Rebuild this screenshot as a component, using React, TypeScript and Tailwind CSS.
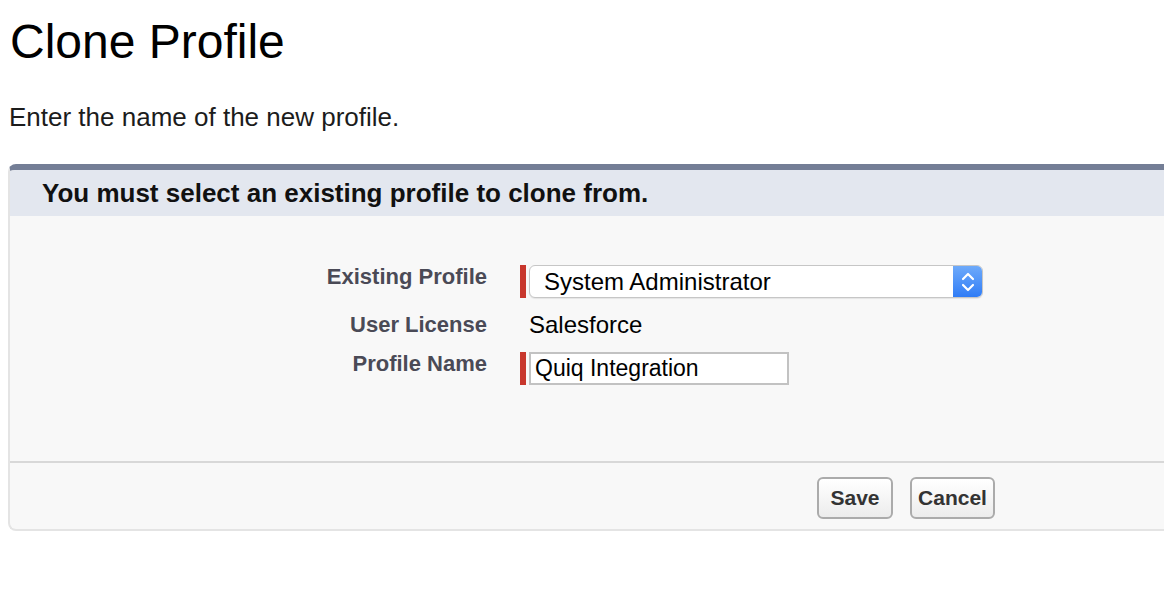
const font = { fontFamily: '"Liberation Sans", Arial, Helvetica, sans-serif' };

function Label({ children }: { children: string }) {
  return (
    <div className="w-[477px] shrink-0 text-right text-[22px] font-bold leading-[24px] text-[#4a4a56]">
      {children}
    </div>
  );
}

function RequiredBar() {
  return <div className="h-[33px] w-[6px] shrink-0 bg-[#c8372d]" />;
}

// up/down arrows on the native-looking select button
function Stepper() {
  return (
    <svg viewBox="0 0 16 24" className="h-[24px] w-[16px]" fill="none" stroke="white" strokeWidth={2.2} strokeLinecap="round" strokeLinejoin="round">
      <path d="M3 9 L8 4 L13 9" />
      <path d="M3 15 L8 20 L13 15" />
    </svg>
  );
}

export default function App() {
  return (
    <div className="min-h-[592px] overflow-hidden bg-white pt-[18px] text-black" style={font}>
      <h1 className="pl-[10px] text-[48px] leading-[48px] font-normal">Clone Profile</h1>
      <p className="mt-[36px] pl-[9px] text-[26px] leading-[30px] text-[#1c1c1c]">Enter the name of the new profile.</p>

      <div className="mt-[32px] ml-[8px] overflow-hidden rounded-tl-[8px] rounded-bl-[8px] border-t-[6px] border-l-2 border-b-2 border-t-[#747e96] border-l-[#e4e4e4] border-b-[#e4e4e4] bg-[#f8f8f8]">
        {/* header */}
        <div className="flex h-[46px] items-center bg-[#e3e7ef] pl-[32px]">
          <h2 className="text-[26px] leading-[30px] font-bold text-[#111]">You must select an existing profile to clone from.</h2>
        </div>

        {/* form body */}
        <div className="flex h-[245px] flex-col gap-[13px] pt-[49px]">
          <div className="flex h-[33px] items-start gap-[33px]">
            <Label>Existing Profile</Label>
            <div className="flex items-start gap-[3px]">
              <RequiredBar />
              <div className="flex h-[33px] w-[454px] items-stretch overflow-hidden rounded-[6px] border border-[#c6c6c6] bg-white shadow-[0_1px_1px_rgba(0,0,0,0.08)]">
                <div className="flex flex-1 items-center pl-[14px] text-[24px] leading-[28px]">System Administrator</div>
                <div className="flex w-[29px] items-center justify-center bg-gradient-to-b from-[#6eaafa] to-[#2f7cf6]">
                  <Stepper />
                </div>
              </div>
            </div>
          </div>

          <div className="flex h-[28px] items-start gap-[33px]">
            <div className="pt-[2px]"><Label>User License</Label></div>
            <div className="pl-[9px] text-[24px] leading-[28px]">Salesforce</div>
          </div>

          <div className="flex h-[33px] items-start gap-[33px]">
            <Label>Profile Name</Label>
            <div className="flex items-start gap-[3px]">
              <RequiredBar />
              <input
                defaultValue="Quiq Integration"
                className="h-[33px] w-[260px] border-2 border-[#c2c2c2] bg-white px-[4px] text-[23px] text-black outline-none"
                style={font}
              />
            </div>
          </div>
        </div>

        {/* footer */}
        <div className="flex h-[68px] gap-[17px] border-t-2 border-[#d8d8d8] pt-[14px] pl-[807px]">
          <button className="h-[42px] w-[76px] rounded-[6px] border-2 border-[#ababab] bg-gradient-to-b from-white to-[#ececec] text-[21px] font-bold text-[#333]">
            Save
          </button>
          <button className="h-[42px] w-[85px] rounded-[6px] border-2 border-[#ababab] bg-gradient-to-b from-white to-[#ececec] text-[21px] font-bold text-[#333]">
            Cancel
          </button>
        </div>
      </div>
    </div>
  );
}
